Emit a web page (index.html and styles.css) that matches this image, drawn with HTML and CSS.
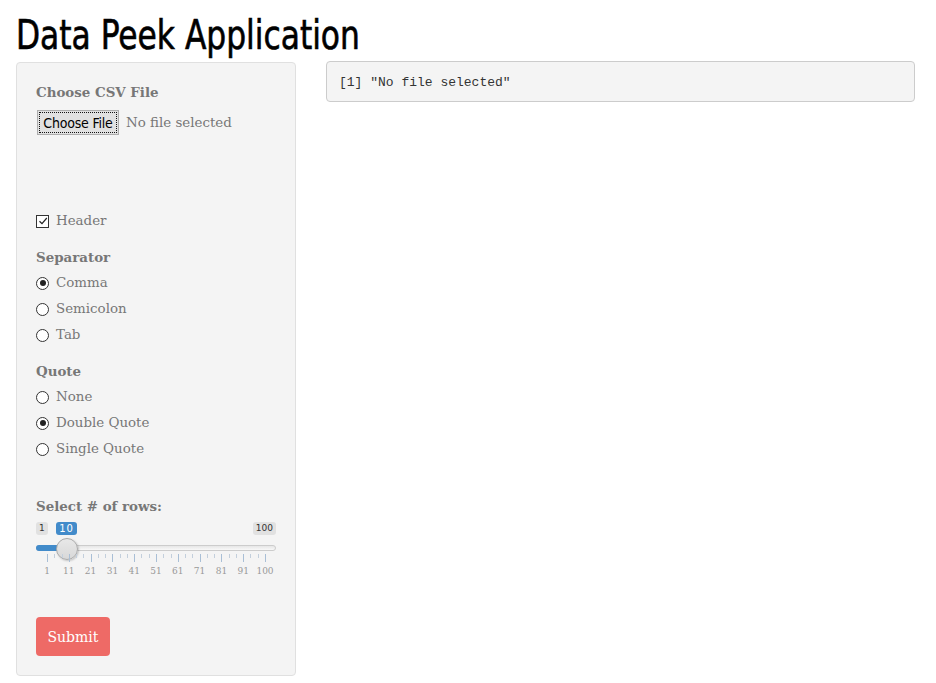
FILE: index.html
```html
<!DOCTYPE html>
<html>
<head>
<meta charset="utf-8">
<title>Data Peek Application</title>
<link rel="stylesheet" href="styles.css">
</head>
<body>
<div class="page">
  <h2 class="title"><span class="title-text">Data Peek Application</span></h2>
  <div class="row">
    <div class="well">
      <div class="label">Choose CSV File</div>
      <div class="file-row">
        <span class="file-btn"><span class="file-btn-inner">Choose File</span></span>
        <span class="file-name">No file selected</span>
      </div>
      <div class="progress-space"></div>

      <div class="opt"><span class="checkbox checked"><svg width="10" height="10" viewBox="0 0 10 10"><path d="M1.5 5.2 L4 7.6 L8.8 2" fill="none" stroke="#222" stroke-width="1.2"/></svg></span>Header</div>

      <div class="label group-label">Separator</div>
      <div class="opt"><span class="radio checked"></span>Comma</div>
      <div class="opt"><span class="radio"></span>Semicolon</div>
      <div class="opt"><span class="radio"></span>Tab</div>

      <div class="label group-label">Quote</div>
      <div class="opt"><span class="radio"></span>None</div>
      <div class="opt"><span class="radio checked"></span>Double Quote</div>
      <div class="opt"><span class="radio"></span>Single Quote</div>

      <div class="label slider-label">Select # of rows:</div>
      <div class="slider">
        <span class="tag tag-min">1</span>
        <span class="tag tag-val">10</span>
        <span class="tag tag-max">100</span>
        <div class="bar"></div>
        <div class="bar-fill"></div>
        <div class="handle"></div>
        <div class="grid" id="grid"></div>
      </div>

      <button class="submit">Submit</button>
    </div>
    <div class="main">
      <pre class="output">[1] "No file selected"</pre>
    </div>
  </div>
</div>
<script src="grid.js"></script>
</body>
</html>
```

FILE: grid.js
```js
(function () {
  var grid = document.getElementById('grid');
  var start = 11, width = 218;
  var labels = ['1','11','21','31','41','51','61','71','81','91','100'];
  for (var i = 0; i <= 10; i++) {
    var x = start + width * i / 10;
    var t = document.createElement('span');
    t.className = 'tick big';
    t.style.left = x + 'px';
    grid.appendChild(t);
    var l = document.createElement('span');
    l.className = 'tick-label';
    l.style.left = x + 'px';
    l.textContent = labels[i];
    grid.appendChild(l);
    if (i < 10) {
      for (var j = 1; j <= 2; j++) {
        var s = document.createElement('span');
        s.className = 'tick small';
        s.style.left = (x + width / 10 * j / 3) + 'px';
        grid.appendChild(s);
      }
    }
  }
})();
```

FILE: styles.css
```css
html, body {
  margin: 0;
  padding: 0;
  background: #fff;
}
body {
  font-family: "DejaVu Serif", "Liberation Serif", serif;
  font-size: 13.4px;
  color: #777;
}
.page {
  padding: 0 16px;
}
.title {
  font-family: "DejaVu Sans Condensed", "DejaVu Sans", sans-serif;
  font-stretch: condensed;
  font-size: 40px;
  font-weight: normal;
  color: #000;
  margin: 0;
  height: 62px;
  line-height: 70px;
  white-space: nowrap;
}
.title-text {
  display: inline-block;
  transform: scaleX(0.87);
  transform-origin: left center;
  -webkit-text-stroke: 0.6px #000;
}
.row {
  display: flex;
  gap: 30px;
  align-items: flex-start;
}
.well {
  width: 280px;
  box-sizing: border-box;
  background: #f4f4f4;
  border: 1px solid #e0e0e0;
  border-radius: 4px;
  padding: 18px 19px 18px 19px;
  min-height: 614px;
}
.label {
  font-weight: bold;
  line-height: 22px;
  color: #777;
}
.file-row {
  display: flex;
  align-items: center;
  margin-top: 7px;
  height: 25px;
}
.file-btn {
  margin-left: 1px;
  box-sizing: border-box;
  width: 82px;
  height: 25px;
  border: 1px solid #adadad;
  background: #e1e1e1;
  padding: 1px;
  display: flex;
}
.file-btn-inner {
  flex: 1;
  border: 1px dotted #111;
  font-family: "DejaVu Sans Condensed", "DejaVu Sans", sans-serif;
  font-stretch: condensed;
  font-size: 14px;
  color: #000;
  display: flex;
  align-items: center;
  justify-content: center;
  letter-spacing: -0.2px;
}
.file-name {
  margin-left: 7px;
  color: #777;
}
.progress-space {
  height: 73px;
}
.opt {
  height: 26px;
  line-height: 26px;
  display: flex;
  align-items: center;
}
.radio {
  width: 11px;
  height: 11px;
  border: 1px solid #333;
  border-radius: 50%;
  margin-right: 7px;
  box-sizing: content-box;
  position: relative;
  background: #fff;
}
.radio.checked::after {
  content: "";
  position: absolute;
  left: 2.5px;
  top: 2.5px;
  width: 6px;
  height: 6px;
  border-radius: 50%;
  background: #222;
}
.checkbox {
  width: 11px;
  height: 11px;
  border: 1px solid #333;
  margin-right: 7px;
  background: #fff;
  display: flex;
  align-items: center;
  justify-content: center;
}
.group-label {
  margin-top: 12px;
  margin-bottom: 2px;
}
.slider-label {
  margin-top: 33px;
}
.slider {
  position: relative;
  height: 58px;
  margin-top: 5px;
  width: 240px;
}
.tag {
  position: absolute;
  top: 0;
  height: 13px;
  line-height: 13px;
  font-size: 9px;
  padding: 0 3px;
  border-radius: 3px;
  background: #e1e1e1;
  color: #333;
  font-family: "DejaVu Sans", sans-serif;
}
.tag-min {
  left: 0;
}
.tag-val {
  left: 20px;
  width: 15px;
  text-align: center;
  background: #428bca;
  color: #fff;
  font-size: 10px;
  letter-spacing: 1px;
}
.tag-max {
  right: 0;
}
.bar {
  position: absolute;
  left: 0;
  right: 0;
  top: 23px;
  height: 6px;
  box-sizing: border-box;
  border: 1px solid #ccc;
  border-radius: 4px;
  background: linear-gradient(#e6e6e6, #f8f8f8);
}
.bar-fill {
  position: absolute;
  left: 0;
  width: 31px;
  top: 23px;
  height: 6px;
  border-radius: 4px 0 0 4px;
  background: #428bca;
}
.handle {
  position: absolute;
  left: 20px;
  top: 16px;
  width: 20px;
  height: 20px;
  border-radius: 50%;
  border: 1px solid #aaa;
  background: linear-gradient(#e8e8e8, #d8d8d8);
  box-shadow: 1px 1px 2px rgba(0,0,0,0.2);
}
.grid {
  position: absolute;
  left: 0;
  top: 31px;
  width: 240px;
  height: 27px;
}
.tick {
  position: absolute;
  top: 1px;
  width: 1px;
  background: #a9bfd6;
}
.tick.big {
  height: 8px;
}
.tick.small {
  height: 4px;
  background: #c3cfdc;
}
.tick-label {
  position: absolute;
  top: 12px;
  transform: translateX(-50%);
  font-size: 9px;
  color: #999;
  line-height: 12px;
}
.submit {
  display: block;
  margin-top: 37px;
  width: 74px;
  height: 39px;
  border: none;
  border-radius: 4px;
  background: #ee6a66;
  color: #fff;
  font-family: "DejaVu Serif", "Liberation Serif", serif;
  font-size: 14px;
  padding: 0;
}
.main {
  width: 589px;
}
.output {
  margin: -1px 0 0 0;
  box-sizing: border-box;
  height: 41px;
  padding: 11px 12px 9px 12px;
  font-family: "Liberation Mono", monospace;
  font-size: 13px;
  line-height: 19px;
  color: #333;
  background: #f4f4f4;
  border: 1px solid #ccc;
  border-radius: 4px;
}
```
